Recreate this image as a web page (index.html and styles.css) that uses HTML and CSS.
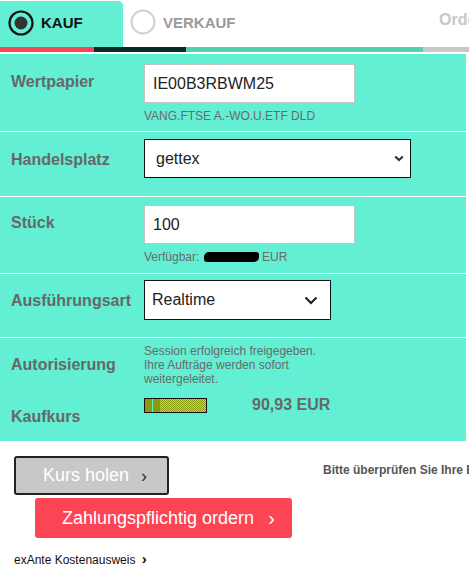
FILE: index.html
```html
<!DOCTYPE html>
<html lang="de">
<head>
<meta charset="utf-8">
<link rel="stylesheet" href="styles.css">
</head>
<body>
<div class="page">
  <div class="tabs">
    <div class="tab tab-active">
      <svg class="radio" width="26" height="26" viewBox="0 0 26 26"><circle cx="13" cy="13" r="11.5" fill="none" stroke="#111" stroke-width="2.2"/><circle cx="13" cy="13" r="6.5" fill="#333"/></svg>
      <span>KAUF</span>
    </div>
    <div class="tab tab-off">
      <svg class="radio" width="26" height="26" viewBox="0 0 26 26"><circle cx="13" cy="13" r="11.5" fill="none" stroke="#cfcfcf" stroke-width="2"/></svg>
      <span>VERKAUF</span>
    </div>
    <div class="tab-order">Order</div>
  </div>
  <div class="stripe">
    <div class="s-red"></div>
    <div class="s-dark"></div>
    <div class="s-teal"></div>
    <div class="s-gray"></div>
  </div>

  <div class="form">
    <div class="row row-1">
      <div class="label">Wertpapier</div>
      <div class="input w-211">IE00B3RBWM25</div>
      <div class="hint">VANG.FTSE A.-WO.U.ETF DLD</div>
    </div>
    <div class="row row-2">
      <div class="label">Handelsplatz</div>
      <div class="select sel-place">
        <span>gettex</span>
        <svg width="10" height="7" viewBox="0 0 10 7"><path d="M1.2 1.5 L5 5 L8.8 1.5" fill="none" stroke="#333" stroke-width="2.2"/></svg>
      </div>
    </div>
    <div class="row row-3">
      <div class="label">Stück</div>
      <div class="input w-211">100</div>
      <div class="hint">Verfügbar: <span class="redact"></span> EUR</div>
    </div>
    <div class="row row-4">
      <div class="label">Ausführungsart</div>
      <div class="select sel-exec">
        <span>Realtime</span>
        <svg width="14" height="9" viewBox="0 0 14 9"><path d="M1.5 1.5 L7 7 L12.5 1.5" fill="none" stroke="#222" stroke-width="2.2"/></svg>
      </div>
    </div>
    <div class="row row-5">
      <div class="label lbl-auth">Autorisierung</div>
      <div class="auth-text">Session erfolgreich freigegeben.<br>Ihre Aufträge werden sofort<br>weitergeleitet.</div>
      <div class="label lbl-kurs">Kaufkurs</div>
      <div class="kurs">
        <div class="bar"><span class="b1"></span><span class="b2"></span><span class="b3"></span><span class="b4"></span></div>
        <div class="price">90,93 EUR</div>
      </div>
    </div>
  </div>

  <div class="actions">
    <div class="act-top">
      <div class="btn-kurs">Kurs holen <span class="chev">›</span></div>
      <div class="notice">Bitte überprüfen Sie Ihre Eingaben</div>
    </div>
    <div class="btn-order">Zahlungspflichtig ordern <span class="chev">›</span></div>
    <div class="exante">exAnte Kostenausweis <span class="chev-s">›</span></div>
  </div>
</div>
</body>
</html>
```
FILE: styles.css
```css
html, body {
  margin: 0;
  padding: 0;
  background: #fff;
}
body {
  width: 469px;
  height: 570px;
  overflow: hidden;
  font-family: "Liberation Sans", Arial, sans-serif;
}
.page {
  width: 469px;
  overflow: hidden;
}
.tabs {
  display: flex;
  height: 47px;
  align-items: stretch;
  white-space: nowrap;
  overflow: hidden;
}
.tab {
  display: flex;
  align-items: center;
  font-weight: bold;
  font-size: 15px;
  flex-shrink: 0;
}
.tab-active {
  width: 123px;
  margin-top: 1px;
  background: #62efd3;
  border-top-right-radius: 5px;
  color: #111;
  padding-left: 8px;
  box-sizing: border-box;
  gap: 7px;
  padding-bottom: 3px;
}
.tab-off {
  width: 316px;
  box-sizing: border-box;
  color: #9a9a9a;
  padding-left: 7px;
  gap: 7px;
  padding-bottom: 3px;
}
.tab-order {
  width: 30px;
  flex-shrink: 0;
  overflow: hidden;
  color: #c8c8c8;
  font-weight: bold;
  font-size: 16px;
  padding-top: 11px;
}
.radio {
  display: block;
}
.stripe {
  display: flex;
  height: 5px;
}
.s-red { width: 94px; background: #fc4455; }
.s-dark { width: 92px; background: #0b2b2a; }
.s-teal { width: 237px; background: #52d0b0; }
.s-gray { flex: 1; background: #c8c8c8; }

.form {
  margin-top: 2px;
  width: 466px;
  background: #62efd3;
}
.row {
  display: grid;
  grid-template-columns: 144px auto 1fr;
  align-items: center;
  border-bottom: 1px solid #fff;
  box-sizing: border-box;
}
.row .label {
  grid-column: 1;
  padding-left: 11px;
  font-size: 16px;
  font-weight: bold;
  color: #676767;
}
.row-1 { height: 78px; padding-top: 10px; align-content: start; }
.row-1 .label { margin-top: -4px; }
.row-2 { height: 65px; align-content: start; padding-top: 7px; }
.row-2 .label { margin-top: 2px; }
.row-3 { height: 77px; padding-top: 8px; align-content: start; }
.row-3 .label { margin-top: -4px; }
.row-4 { height: 64px; align-content: start; padding-top: 6px; }
.row-4 .label { margin-top: 1px; }
.row-5 {
  height: 103px;
  border-bottom: none;
  grid-template-columns: 144px 1fr;
  grid-template-rows: auto auto;
  align-content: start;
  padding-top: 6px;
}
.input {
  grid-column: 2;
  height: 39px;
  box-sizing: border-box;
  background: #fff;
  border: 1px solid #c3c3c3;
  padding-left: 8px;
  display: flex;
  align-items: center;
  font-size: 16px;
  color: #222;
}
.w-211 { width: 211px; }
.hint {
  grid-column: 2 / span 2;
  font-size: 12px;
  color: #6a6a6a;
  margin-top: 6px;
  display: flex;
  align-items: center;
  white-space: pre;
}
.redact {
  display: inline-block;
  width: 55px;
  height: 10px;
  background: #000;
  border-radius: 5px 3px 5px 3px;
  margin: 0 0 0 1px;
}
.select {
  grid-column: 2;
  box-sizing: border-box;
  background: #fff;
  border: 1px solid #111;
  display: flex;
  align-items: center;
  justify-content: space-between;
  font-size: 16px;
  color: #222;
}
.sel-place {
  width: 267px;
  height: 39px;
  padding: 0 6px 0 11px;
}
.sel-exec {
  width: 187px;
  height: 40px;
  padding: 0 12px 0 7px;
}
.select svg { display: block; }
.lbl-auth {
  grid-row: 1;
  align-self: center;
}
.auth-text {
  grid-column: 2;
  grid-row: 1;
  font-size: 12px;
  line-height: 14px;
  color: #6a6a6a;
}
.lbl-kurs {
  grid-row: 2;
  align-self: end;
  margin-bottom: -4px;
}
.kurs {
  grid-column: 2;
  grid-row: 2;
  display: flex;
  align-items: center;
  padding-top: 10px;
  padding-bottom: 8px;
}
.bar {
  width: 63px;
  height: 15px;
  box-sizing: border-box;
  border: 1px solid #111;
  display: flex;
}
.bar span { display: block; height: 100%; }
.b1 { width: 7px; background: #8a9a0e; }
.b2 { width: 1px; background: #62efd3; }
.b3 { width: 7px; background: #8a9a0e; }
.b4 {
  flex: 1;
  background: repeating-conic-gradient(#8a9a0e 0 25%, #62efd3 0 50%) 0 0 / 2px 2px;
}
.price {
  margin-left: 45px;
  font-size: 16px;
  font-weight: bold;
  color: #676767;
}

.actions {
  padding: 15px 0 0 14px;
}
.act-top {
  display: flex;
  align-items: flex-start;
  white-space: nowrap;
}
.btn-kurs {
  flex-shrink: 0;
  width: 155px;
  height: 39px;
  box-sizing: border-box;
  background: #c8c8c8;
  border: 2px solid #222;
  border-radius: 3px;
  color: #fff;
  font-size: 18px;
  display: flex;
  align-items: center;
  padding-left: 27px;
}
.btn-kurs .chev {
  color: #333;
  font-size: 18px;
  margin-left: 12px;
  margin-top: 2px;
}
.notice {
  flex-shrink: 0;
  margin-left: 154px;
  margin-top: 7px;
  font-size: 12px;
  font-weight: bold;
  color: #555;
}
.btn-order {
  margin: 3px 0 0 21px;
  width: 257px;
  height: 40px;
  box-sizing: border-box;
  background: #fc4455;
  border-radius: 3px;
  color: #fff;
  font-size: 18px;
  display: flex;
  align-items: center;
  padding-left: 27px;
}
.btn-order .chev {
  font-size: 20px;
  margin-left: 14px;
}
.exante {
  margin-top: 12px;
  font-size: 12px;
  color: #111;
}
.chev-s {
  font-size: 15px;
  font-weight: bold;
  margin-left: 3px;
}
```
